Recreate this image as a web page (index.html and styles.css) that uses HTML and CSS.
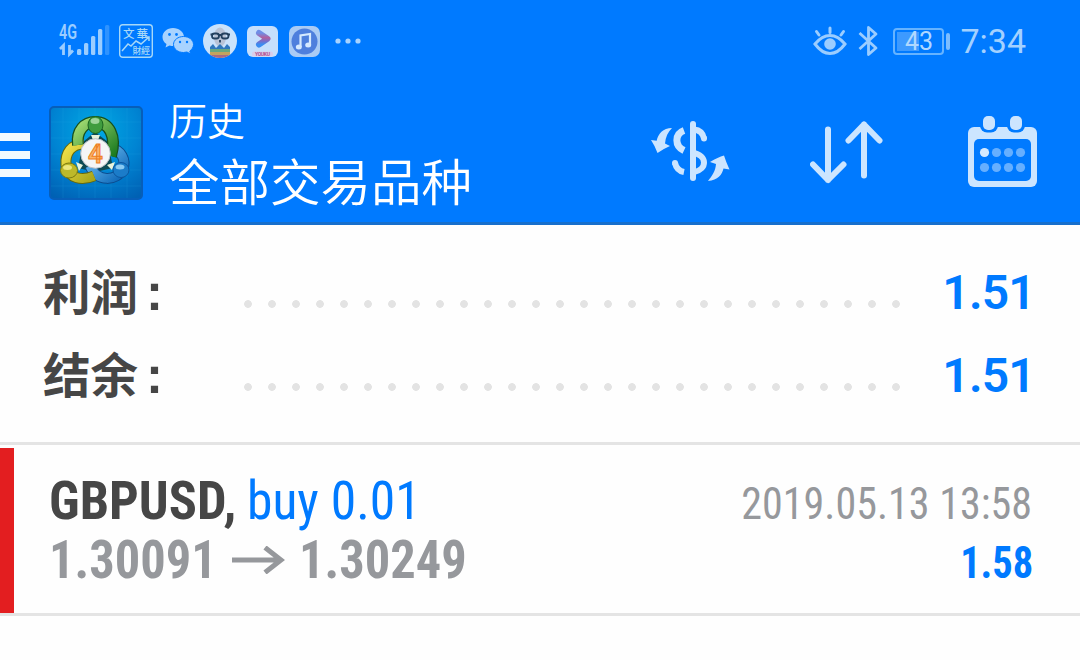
FILE: index.html
```
<!DOCTYPE html>
<html lang="zh-CN">
  <head>
    <meta charset="UTF-8" />
    <meta name="viewport" content="width=device-width, initial-scale=1.0" />
    <title>历史</title>
    <link rel="stylesheet" href="styles.css">
  </head>
  <body>
    <header>
      <!-- Status bar -->
      <div class="status-bar">
        <div class="status-left">
          <svg class="signal" width="52" height="52" viewBox="-1 -8 52 52">
            <text x="0" y="16" class="net" textLength="18" lengthAdjust="spacingAndGlyphs">4G</text>
            <path d="M1 26 L4.500 22.500 V32 M10.500 22 V31 L14 27.500" fill="none" stroke="#9bcdff" stroke-width="2.800" />
            <g fill="#9bcdff">
              <rect x="18" y="26" width="4.300" height="6" rx="1.500" />
              <rect x="25" y="20" width="4.300" height="12" rx="1.500" />
              <rect x="32" y="13" width="4.300" height="19" rx="1.500" />
              <rect x="39" y="6" width="4.300" height="26" rx="1.500" />
              <rect x="46" y="2" width="4.300" height="30" rx="1.500" opacity=".3" />
            </g>
          </svg>
          <svg class="news" width="34" height="34" viewBox="0 0 34 34">
            <rect x=".7" y=".7" width="32.600" height="32.600" rx="3" fill="none" stroke="#a6d8f8" stroke-width="1.400" />
            <text x="4" y="14" font-size="11.500" textLength="25">文華</text>
            <text x="13.500" y="30" font-size="9" textLength="17.500">財經</text>
            <path d="M3 27 L9 20 L12 22 L17 17 L22 20 L30 13 M26 13 h4 v4" fill="none" stroke="#a6d8f8" stroke-width="1.500" />
          </svg>
          <svg class="wechat" width="32" height="28" viewBox="0 0 32 28">
            <path d="M11 1 C5 1 .5 5 .5 10 C.5 13 2 15.500 4.500 17 L3.500 20.500 L7.500 18.500 Q9.500 19 11.500 19 C17 19 22 15 22 10 C22 5 17 1 11 1z" fill="#a8d3ff" />
            <path d="M21.500 9.500 C16 9.500 11.500 13 11.500 17.500 C11.500 22 16 25.500 21.500 25.500 L25 25 L28.500 27 L27.800 24 C30 22.500 31.500 20 31.500 17.500 C31.500 13 27 9.500 21.500 9.500z" fill="#a8d3ff" stroke="#007aff" stroke-width="1" />
            <g fill="#007aff">
              <circle cx="7.500" cy="7.500" r="1.400" /><circle cx="14.500" cy="7.500" r="1.400" />
              <circle cx="18" cy="15" r="1.200" /><circle cx="25" cy="15" r="1.200" />
            </g>
          </svg>
          <svg class="avatar" width="34" height="34" viewBox="0 0 34 34">
            <clipPath id="round"><circle cx="17" cy="17" r="17" /></clipPath>
            <g clip-path="url(#round)">
              <rect width="34" height="34" fill="#c9e2fb" />
              <ellipse cx="17" cy="13" rx="6" ry="9.500" fill="#b8c3d6" />
              <path d="M7 26 V23 L10 20 L13 24 L17 20 L21 24 L24 20 L27 23 V26z" fill="#2f78bd" />
              <path d="M7 25 H27 V28 H7z" fill="#68a77f" />
              <path d="M7 28 H27 V31 H7z" fill="#c2a35f" />
              <path d="M7 31 H27 V34 H7z" fill="#a76a83" />
              <g fill="none" stroke="#23415f" stroke-width="1.800">
                <rect x="9" y="9.500" width="7" height="5" rx="2.500" />
                <rect x="18.500" y="9.500" width="7" height="5" rx="2.500" />
                <path d="M7.500 10.500 h2 M16 11 h2.500 M25.500 10.500 h1.500 M17 16 v2.500" />
              </g>
            </g>
          </svg>
          <svg class="video" width="31" height="31" viewBox="0 0 31 31">
            <defs>
              <linearGradient id="play" x1="0" y1="0" x2="0" y2="1">
                <stop offset="0" stop-color="#6f8ee6" />
                <stop offset=".4" stop-color="#b0609f" />
                <stop offset=".7" stop-color="#7a6cc8" />
                <stop offset="1" stop-color="#3a8cf2" />
              </linearGradient>
            </defs>
            <rect width="31" height="31" rx="6" fill="#c6dffc" />
            <path d="M12 7 L20.500 12.700 L12 18.500" fill="none" stroke="url(#play)" stroke-width="6" stroke-linecap="round" stroke-linejoin="round" />
            <rect x="5" y="25.500" width="21" height="5" rx="2" fill="#d8cdeb" />
            <text x="8" y="30" class="tag" textLength="15">YOUKU</text>
          </svg>
          <svg class="music" width="31" height="31" viewBox="0 0 31 31">
            <rect width="31" height="31" rx="7" fill="#a9cbf5" />
            <circle cx="15.500" cy="15.500" r="13" fill="#4e7fdd" />
            <path d="M11.500 21 V9.500 L21 8 V19" fill="none" stroke="#d5e9ff" stroke-width="2.200" />
            <ellipse cx="9.800" cy="21" rx="3" ry="2.500" fill="#d5e9ff" />
            <ellipse cx="19.200" cy="19" rx="3" ry="2.500" fill="#d5e9ff" />
          </svg>
          <svg class="more" width="26" height="6" viewBox="0 0 26 6" fill="#a8d3ff">
            <circle cx="3" cy="3" r="2.600" /><circle cx="13" cy="3" r="2.600" /><circle cx="23" cy="3" r="2.600" />
          </svg>
        </div>
        <div class="status-right">
          <svg class="eye" width="34" height="30" viewBox="0 0 34 30">
            <g fill="none" stroke="#9bcdff" stroke-width="3" stroke-linecap="round">
              <path d="M2 18 Q9 9.500 17 9.500 T32 18 Q25 27.500 17 27.500 T2 18z" />
              <path d="M17 6.500 V2 M6 9 L3.500 5.500 M28 9 L30.500 5.500" />
            </g>
            <circle cx="17" cy="18" r="5.800" fill="#9bcdff" />
          </svg>
          <svg class="bluetooth" width="22" height="32" viewBox="0 0 22 32">
            <path d="M2.500 8 L19 23 L11.500 29.500 V2.500 L19 9 L2.500 24" fill="none" stroke="#9bcdff" stroke-width="2.800" stroke-linejoin="round" />
          </svg>
          <div class="battery"><span>43</span></div>
          <span class="clock">7:34</span>
        </div>
      </div>

      <!-- Title bar -->
      <div class="title-bar">
        <div class="menu"><i></i><i></i><i></i></div>
        <svg class="logo" width="94" height="94" viewBox="0 0 94 94">
          <defs>
            <radialGradient id="bg" cx=".5" cy=".25" r=".85">
              <stop offset="0" stop-color="#00a9e4" />
              <stop offset=".55" stop-color="#0084d3" />
              <stop offset="1" stop-color="#0061b4" />
            </radialGradient>
            <linearGradient id="green" x1="0" y1="0" x2="1" y2="1">
              <stop offset="0" stop-color="#a3dc73" /><stop offset="1" stop-color="#1c7b20" />
            </linearGradient>
            <linearGradient id="yellow" x1="0" y1="0" x2="1" y2="1">
              <stop offset="0" stop-color="#f3e24a" /><stop offset="1" stop-color="#a8a51a" />
            </linearGradient>
            <linearGradient id="blue" x1="0" y1="0" x2="1" y2="1">
              <stop offset="0" stop-color="#7cc8f6" /><stop offset="1" stop-color="#0a66b8" />
            </linearGradient>
          </defs>
          <rect x="1" y="1" width="92" height="92" rx="4" fill="url(#bg)" stroke="#075eb9" stroke-width="2" />
          <path d="M14 2 V92 M30 2 V92 M46 2 V92 M62 2 V92 M78 2 V92 M2 16 H92 M2 32 H92 M2 48 H92 M2 64 H92 M2 80 H92" stroke="#35b5ee" stroke-width=".7" opacity=".2" />
          <path d="M34 36 L46 26 L59 36 L64 62 L46 66 L29 62z" fill="#0d4a55" />
          <g fill="none">
            <path d="M61 42 C73 44 77 54 74 63 C68 75 48 77 41 60" stroke="#0b4c8f" stroke-width="11" />
            <path d="M61 42 C73 44 77 54 74 63 C68 75 48 77 41 60" stroke="url(#blue)" stroke-width="9" />
            <path d="M35 38 C22 38 16 47 17 59 C20 73 33 75 45 70" stroke="#65680c" stroke-width="11" />
            <path d="M35 38 C22 38 16 47 17 59 C20 73 33 75 45 70" stroke="url(#yellow)" stroke-width="9" />
            <path d="M29 39 C27 24 36 16 46 16 C60 16 68 30 62 50" stroke="#17501d" stroke-width="12" />
            <path d="M29 39 C27 24 36 16 46 16 C60 16 68 30 62 50" stroke="url(#green)" stroke-width="9.500" />
          </g>
          <path d="M42 29 h9 l-2 5 h-5z M27 56 l7 3 -4 6z M58 59 l8 -3 -3 8z" fill="#e7f3dc" />
          <ellipse cx="46.500" cy="19" rx="7.500" ry="8.500" fill="#3f9c3f" stroke="#19641f" />
          <ellipse cx="46" cy="15" rx="4.500" ry="3" fill="#9ed49a" />
          <ellipse cx="20" cy="64.500" rx="8.500" ry="7.500" fill="#bdb92a" stroke="#7c7a10" />
          <ellipse cx="18.500" cy="61.500" rx="4.500" ry="2.500" fill="#ece77c" />
          <ellipse cx="72" cy="64" rx="8" ry="7.500" fill="#1b7cc9" stroke="#0b569f" />
          <ellipse cx="71" cy="61" rx="4.500" ry="2.500" fill="#8bcaf2" />
          <circle cx="46.500" cy="47.500" r="14.800" fill="#f4f5f6" stroke="#b8bfc5" />
          <text x="39" y="56.500" class="four">4</text>
        </svg>
        <div class="titles">
          <div class="title">历史</div>
          <div class="subtitle">全部交易品种</div>
        </div>
        <div class="actions">
          <svg width="80" height="64" viewBox="0 0 80 64">
            <g fill="none" stroke="#cce5ff" stroke-width="6">
              <path d="M42 5 V59" stroke-linecap="round" />
              <path d="M33 11.500 C23.500 15 23.500 27 33 31.500" stroke-width="7" />
              <path d="M24 44 C25 48.500 28 52 33 53" />
              <path d="M43 10.500 C48 11 52 14 53 19.500" />
              <path d="M42 34 C56.500 36 56.500 50.500 43 53" />
              <path d="M24 44 v.1 M53 19.300 v.1" stroke-linecap="round" />
            </g>
            <g fill="#cce5ff">
              <path d="M21 9 C12 9 7 15 5.700 21.700 L0 21 Q4 27 6.500 34 Q12 30 19 27 L14 24.500 C14.500 18 17 13 21 9z" />
              <path d="M57 62 C67 61 71 56 72.500 49.500 L78.500 50.500 Q75 43 73 36.500 Q67 38 59 43 L65 45 C64.500 52 61 57 57 62z" />
            </g>
          </svg>
          <svg class="sort" width="74" height="66" viewBox="0 0 74 66">
            <path d="M18 10.500 V61 M3 45.500 L18 61 L33.500 45.500 M54 56.500 V5.500 M38.500 21.500 L54 5.500 L69.500 21.500" fill="none" stroke="#cce5ff" stroke-width="6" stroke-linecap="round" stroke-linejoin="round" />
          </svg>
          <svg class="calendar" width="70" height="72" viewBox="0 0 70 72">
            <rect x="0" y="12" width="69" height="60" rx="6" fill="#cce5ff" />
            <rect x="12" y="-4" width="18" height="21.500" rx="7" fill="#007aff" />
            <rect x="39" y="-4" width="18" height="21.500" rx="7" fill="#007aff" />
            <rect x="15" y="1" width="12" height="14" rx="5" fill="#cce5ff" />
            <rect x="42" y="1" width="12" height="14" rx="5" fill="#cce5ff" />
            <rect x="6" y="24" width="57" height="42" rx="5" fill="#007aff" />
            <circle cx="16.500" cy="37.500" r="4.600" fill="#d5eaff" />
            <g fill="#66afff">
              <circle cx="28.500" cy="37.500" r="4.600" /><circle cx="40.500" cy="37.500" r="4.600" /><circle cx="52.500" cy="37.500" r="4.600" />
              <circle cx="16.500" cy="52.500" r="4.600" /><circle cx="28.500" cy="52.500" r="4.600" /><circle cx="40.500" cy="52.500" r="4.600" /><circle cx="52.500" cy="52.500" r="4.600" />
            </g>
          </svg>
        </div>
      </div>
    </header>

    <!-- Totals -->
    <section class="summary">
      <div class="total">
        <span class="label">利润<b>:</b></span>
        <span class="dots"></span>
        <span class="value">1.51</span>
      </div>
      <div class="total">
        <span class="label">结余<b>:</b></span>
        <span class="dots"></span>
        <span class="value">1.51</span>
      </div>
    </section>

    <!-- Deals -->
    <section class="deal">
      <div class="deal-line">
        <div class="deal-name"><span class="symbol">GBPUSD,</span><span class="side">buy 0.01</span></div>
        <span class="date">2019.05.13 13:58</span>
      </div>
      <div class="deal-line">
        <div class="prices">
          <span>1.30091</span>
          <svg width="53" height="28" viewBox="0 0 53 28">
            <path d="M0 14 H49 M33 1.500 L49 14 L33 26.500" fill="none" stroke="#96989c" stroke-width="5" />
          </svg>
          <span>1.30249</span>
        </div>
        <span class="profit">1.58</span>
      </div>
    </section>
  </body>
</html>
```
FILE: styles.css
```
:root {
  --blue: #007aff;
  --icon: #9bcdff;
  --dark: #464646;
  --gray: #96989c;
  --line: #e4e4e4;
}

* {
  box-sizing: border-box;
}

body {
  margin: 0;
  background: #fefefe;
  font-family: Roboto, "Noto Sans CJK SC", sans-serif;
  height: 660px;
  overflow: hidden;
}

svg {
  display: block;
  flex-shrink: 0;
}

header {
  height: 225px;
  background: var(--blue);
  border-bottom: 3px solid #176fcc;
}

.status-bar {
  height: 82px;
  padding: 0 54px 0 58px;
  display: flex;
  justify-content: space-between;
  align-items: center;
}

.status-left,
.status-right {
  display: flex;
  align-items: center;
}

.news {
  margin-left: 9px;
}

.news text {
  fill: #a6d8f8;
  font-family: "Noto Sans CJK TC", sans-serif;
  font-weight: 500;
}

.wechat,
.avatar {
  margin-left: 9px;
}

.video {
  margin-left: 10px;
}

.music {
  margin-left: 11px;
}

.more {
  margin-left: 15px;
}

.net {
  font-size: 21px;
  font-weight: 600;
  fill: var(--icon);
}

.tag {
  font-size: 5px;
  font-weight: 700;
  fill: #b0508c;
}

.bluetooth {
  margin-left: 10px;
}

.battery {
  position: relative;
  width: 51px;
  height: 27px;
  margin-left: 14px;
  border: 2px solid #66b3ff;
  border-radius: 4px;
  background: linear-gradient(#3d9aff, #3d9aff) 2px 2px / 22px 19px no-repeat;
  color: #b0d8ff;
  font-size: 25px;
  line-height: 23px;
  text-align: center;
}

.battery::after {
  content: "";
  position: absolute;
  right: -8px;
  top: 3px;
  width: 4px;
  height: 17px;
  border-radius: 2px;
  background: #7dbdff;
}

.clock {
  margin-left: 16px;
  color: #a3d1ff;
  font-size: 34px;
}

.title-bar {
  height: 140px;
  display: flex;
  align-items: flex-start;
}

.menu {
  width: 30px;
  margin-top: 51px;
  display: flex;
  flex-direction: column;
  gap: 10px;
}

.menu i {
  height: 8px;
  background: #f2faff;
}

.logo {
  margin: 24px 0 0 19px;
}

.four {
  font-size: 26px;
  font-weight: 600;
  fill: #fbb36b;
  stroke: #ee7f1d;
  stroke-width: 1px;
}

.titles {
  margin: 14px 0 0 26px;
  color: #fff;
  font-family: "Noto Sans CJK SC", sans-serif;
  font-weight: 350;
}

.title {
  font-size: 38px;
  line-height: 45px;
}

.subtitle {
  font-size: 50.5px;
  line-height: 76px;
}

.actions {
  margin-left: auto;
  margin-right: 42px;
  display: flex;
  align-items: flex-start;
}

.actions svg {
  margin-top: 37px;
}

.actions .sort {
  margin-left: 79px;
}

.actions .calendar {
  margin-top: 33px;
  margin-left: 84px;
}

.summary {
  height: 220px;
  padding: 26px 49px 0 43px;
  border-bottom: 3px solid var(--line);
}

.total {
  height: 83px;
  display: flex;
  align-items: center;
}

.label {
  width: 201px;
  height: 83px;
  display: flex;
  color: var(--dark);
  font-family: "Noto Sans CJK SC", sans-serif;
  font-size: 47.5px;
  font-weight: 700;
  line-height: 77px;
}

.label b {
  margin-left: 8px;
  font-family: "Liberation Sans", sans-serif;
  font-size: 51px;
  line-height: 83px;
}

/* dotted leader */
.dots {
  width: 660px;
  height: 8px;
  margin-top: 23px;
  background: radial-gradient(circle at 4px 4px, #e3e3e3 3.5px, transparent 4.200px) 0 0 / 24px 8px;
}

.value {
  margin-left: auto;
  margin-right: -4px;
  color: var(--blue);
  font-size: 48px;
  font-weight: 600;
  letter-spacing: -.8px;
}

.deal {
  position: relative;
  height: 171px;
  padding: 26px 49px 0;
  border-bottom: 3px solid var(--line);
  font-family: "Roboto Condensed", Roboto, sans-serif;
  font-stretch: 75%;
}

.deal::before {
  content: "";
  position: absolute;
  left: 0;
  top: 3px;
  bottom: 0;
  width: 14px;
  background: #e31e20;
}

.deal-line {
  height: 59px;
  display: flex;
  justify-content: space-between;
  align-items: baseline;
  line-height: 59px;
  white-space: nowrap;
}

.deal-name,
.prices {
  display: flex;
  align-items: baseline;
  font-size: 54px;
}

/* narrower digits and letters */
.symbol,
.side,
.prices span {
  transform: scaleX(.97);
  transform-origin: left;
}

.symbol {
  width: 186px;
  color: var(--dark);
  font-weight: 700;
}

.side {
  margin-left: 12px;
  color: var(--blue);
  transform: scaleX(.955);
}

.prices {
  color: var(--gray);
  font-weight: 700;
}

.prices span {
  width: 170px;
  transform: scaleX(.935);
}

.prices svg {
  margin: 0 14px 0 13px;
  align-self: center;
}

.date,
.profit {
  margin-right: -1px;
  font-size: 45px;
  transform: scaleX(.935);
  transform-origin: right;
}

.date {
  color: var(--gray);
}

.profit {
  margin-right: -2px;
  color: var(--blue);
  font-weight: 700;
  transform: scaleX(.9);
}
```
